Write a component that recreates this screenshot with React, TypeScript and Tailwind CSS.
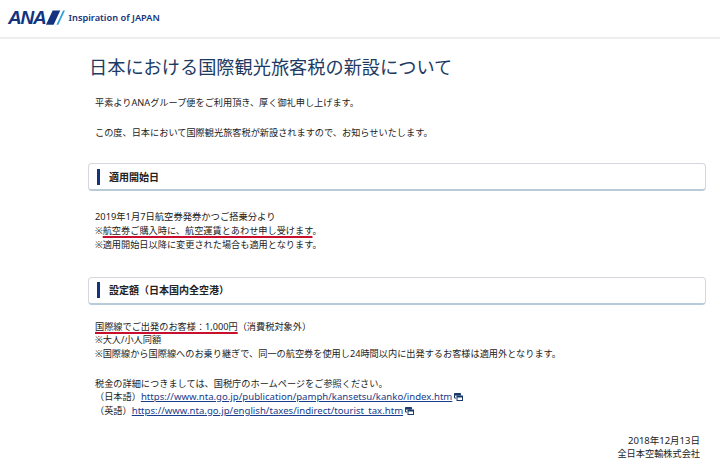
import React from 'react';

const font = { fontFamily: '"Noto Sans", "Noto Sans CJK JP", sans-serif' };

function ExternalIcon() {
  return (
    <svg viewBox="0 0 9 8" className="inline-block w-[9px] h-[8px] ml-[2px] align-[-1px]">
      <path d="M0.5 0.5h6v1.6h-6z M0.5 2v3h1.6" fill="none" stroke="#1a3a6e" strokeWidth="1" />
      <rect x="0.5" y="0.5" width="6" height="1.5" fill="#1a3a6e" />
      <rect x="3" y="3" width="5.5" height="4.5" fill="#fff" stroke="#1a3a6e" strokeWidth="1" />
      <rect x="3" y="3" width="5.5" height="1.5" fill="#1a3a6e" />
    </svg>
  );
}

function Logo() {
  return (
    <div className="flex items-center">
      <span
        className="text-[19px] leading-none font-bold italic tracking-[-1.2px] text-[#13337f]"
        style={{ fontFamily: '"Liberation Sans", sans-serif' }}
      >
        ANA
      </span>
      <svg viewBox="0 0 20 15" className="w-[19px] h-[15px]">
        <polygon points="0,15 7,0 15,0 8,15" fill="#13337f" />
        <polygon points="11,15 18,0 20,0 13,15" fill="#2f9fd8" />
      </svg>
    </div>
  );
}

function SectionCard({ children }: { children: React.ReactNode }) {
  return (
    <div className="h-[28px] w-[618px] flex items-center pl-[8px] bg-white rounded-[4px] border border-[#d4d8de] border-b-2 border-b-[#b9cbd9]">
      <div className="w-[3px] h-[16px] bg-[#13337f]" />
      <h2 className="ml-[9px] text-[10px] leading-none font-bold text-[#222]">{children}</h2>
    </div>
  );
}

function RedLine({ children }: { children: React.ReactNode }) {
  return (
    <span className="underline decoration-[#c8102e] decoration-[1.5px] underline-offset-[2px] [text-decoration-skip-ink:none]">
      {children}
    </span>
  );
}

export default function App() {
  return (
    <div className="w-[720px] h-[468px] overflow-hidden bg-white text-[9.18px] leading-[13.7px] text-[#222]" style={font}>
      <header className="h-[39px] flex items-center pl-[8px] pb-[2px] border-b-2 border-[#eeeeee]">
        <Logo />
        <span
          className="ml-[4px] text-[9.25px] font-semibold text-[#13337f]"
          style={{ fontFamily: '"Noto Sans", sans-serif' }}
        >
          Inspiration of JAPAN
        </span>
      </header>

      <main className="pl-[88px] pt-[15px]">
        <h1 className="ml-[1px] text-[18.2px] leading-[26px] text-[#1c3b63]">日本における国際観光旅客税の新設について</h1>

        <p className="ml-[7px] mt-[16px]">平素よりANAグループ便をご利用頂き、厚く御礼申し上げます。</p>
        <p className="ml-[7px] mt-[16px]">この度、日本において国際観光旅客税が新設されますので、お知らせいたします。</p>

        <div className="mt-[24px]">
          <SectionCard>適用開始日</SectionCard>
        </div>
        <div className="ml-[7px] mt-[19px]">
          <p className="text-[9.3px]">2019年1月7日航空券発券かつご搭乗分より</p>
          <p>
            ※<RedLine>航空券ご購入時に、航空運賃とあわせ申し受けます</RedLine>。
          </p>
          <p>※適用開始日以降に変更された場合も適用となります。</p>
        </div>

        <div className="mt-[25px]">
          <SectionCard>設定額（日本国内全空港）</SectionCard>
        </div>
        <div className="ml-[7px] mt-[15px]">
          <p>
            <RedLine>国際線でご出発のお客様：1,000円</RedLine>（消費税対象外）
          </p>
          <p>※大人/小人同額</p>
          <p>※国際線から国際線へのお乗り継ぎで、同一の航空券を使用し24時間以内に出発するお客様は適用外となります。</p>
        </div>

        <div className="ml-[7px] mt-[16px]">
          <p>税金の詳細につきましては、国税庁のホームページをご参照ください。</p>
          <p>
            （日本語）
            <a className="underline text-[9.6px] text-[#1a3a8a]" href="#">https://www.nta.go.jp/publication/pamph/kansetsu/kanko/index.htm</a>
            <ExternalIcon />
          </p>
          <p>
            （英語）
            <a className="underline text-[9.6px] text-[#1a3a8a]" href="#">https://www.nta.go.jp/english/taxes/indirect/tourist_tax.htm</a>
            <ExternalIcon />
          </p>
        </div>

        <div className="w-[612px] mt-[16px] text-right">
          <p className="text-[9.5px]">2018年12月13日</p>
          <p>全日本空輸株式会社</p>
        </div>
      </main>
    </div>
  );
}
